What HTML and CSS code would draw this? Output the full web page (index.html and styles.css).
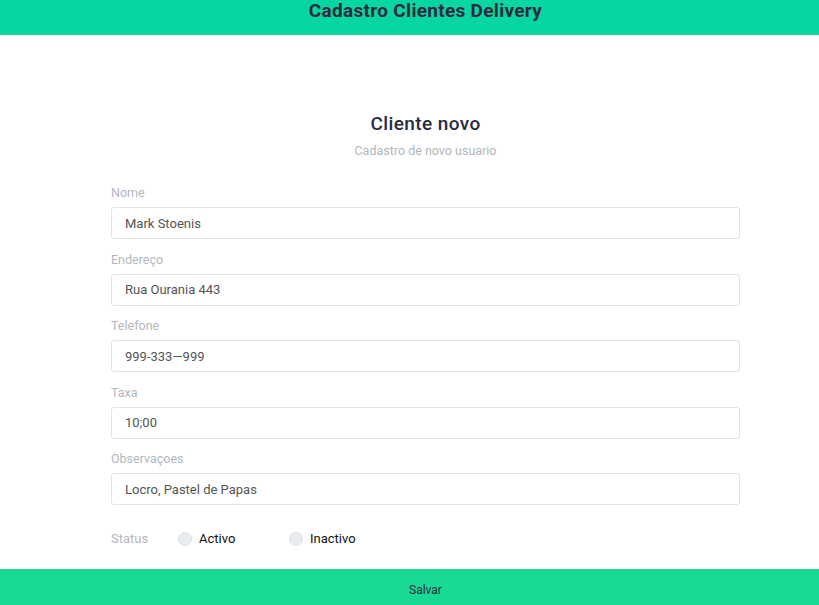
FILE: index.html
```html
<!DOCTYPE html>
<html lang="pt">
<head>
<meta charset="utf-8">
<link rel="stylesheet" href="styles.css">
</head>
<body>
<header class="topbar"><h1 class="topbar-title">Cadastro Clientes Delivery</h1></header>
<main class="content">
  <div class="heading">
    <h2 class="title">Cliente novo</h2>
    <p class="subtitle">Cadastro de novo usuario</p>
  </div>
  <form class="form">
    <div class="field"><label class="label">Nome</label><input class="input" value="Mark Stoenis"></div>
    <div class="field"><label class="label">Endereço</label><input class="input" value="Rua Ourania 443"></div>
    <div class="field"><label class="label">Telefone</label><input class="input" value="999-333—999"></div>
    <div class="field"><label class="label">Taxa</label><input class="input" value="10;00"></div>
    <div class="field"><label class="label">Observaçoes</label><input class="input" value="Locro, Pastel de Papas"></div>
    <div class="status">
      <span class="status-label">Status</span>
      <label class="radio"><span class="dot"></span>Activo</label>
      <label class="radio"><span class="dot"></span>Inactivo</label>
    </div>
  </form>
</main>
<footer class="footer"><button class="save">Salvar</button></footer>
</body>
</html>
```
FILE: styles.css
```css
* { box-sizing: border-box; }
html, body { margin: 0; padding: 0; background: #fff; overflow: hidden; }
body { font-family: Roboto, "Liberation Sans", sans-serif; width: 819px; height: 605px; display: flex; flex-direction: column; }
.topbar { background: #07d6a0; height: 35px; padding-left: 32px; display: flex; justify-content: center; }
.topbar-title { margin: 0; font-size: 19px; line-height: 22px; font-weight: 700; color: #2a2b3f; letter-spacing: 0.3px; }
.content { flex: 1; padding: 78px 79px 0 111px; }
.heading { text-align: center; }
.title { margin: 0; font-size: 19px; line-height: 22px; font-weight: 500; color: #2a2b3f; letter-spacing: 0.4px; }
.subtitle { margin: 8px 0 0; font-size: 12.5px; line-height: 16px; color: #b1b6bc; }
.form { margin-top: 26px; }
.field { display: flex; flex-direction: column; margin-bottom: 12.5px; }
.label { font-size: 12.5px; line-height: 16px; color: #b3b8bf; margin-bottom: 6px; }
.input { height: 32px; border: 1px solid #e1e1e6; border-radius: 3px; padding: 0 13px; font-family: inherit; font-size: 13px; color: #555; outline: none; }
.status { display: flex; align-items: center; margin-top: 26px; font-size: 13px; }
.status-label { color: #b3b8bf; width: 67px; }
.radio { display: flex; align-items: center; color: #111; width: 111px; }
.dot { width: 14px; height: 14px; border-radius: 50%; background: #e9edf0; border: 1px solid #dde2e6; margin-right: 7px; }
.footer { height: 36px; background: #19da94; }
.save { width: 100%; height: 100%; border: 0; background: transparent; padding: 6px 0 0 32px; font-family: inherit; font-size: 12px; color: #2a2b3f; }
```
